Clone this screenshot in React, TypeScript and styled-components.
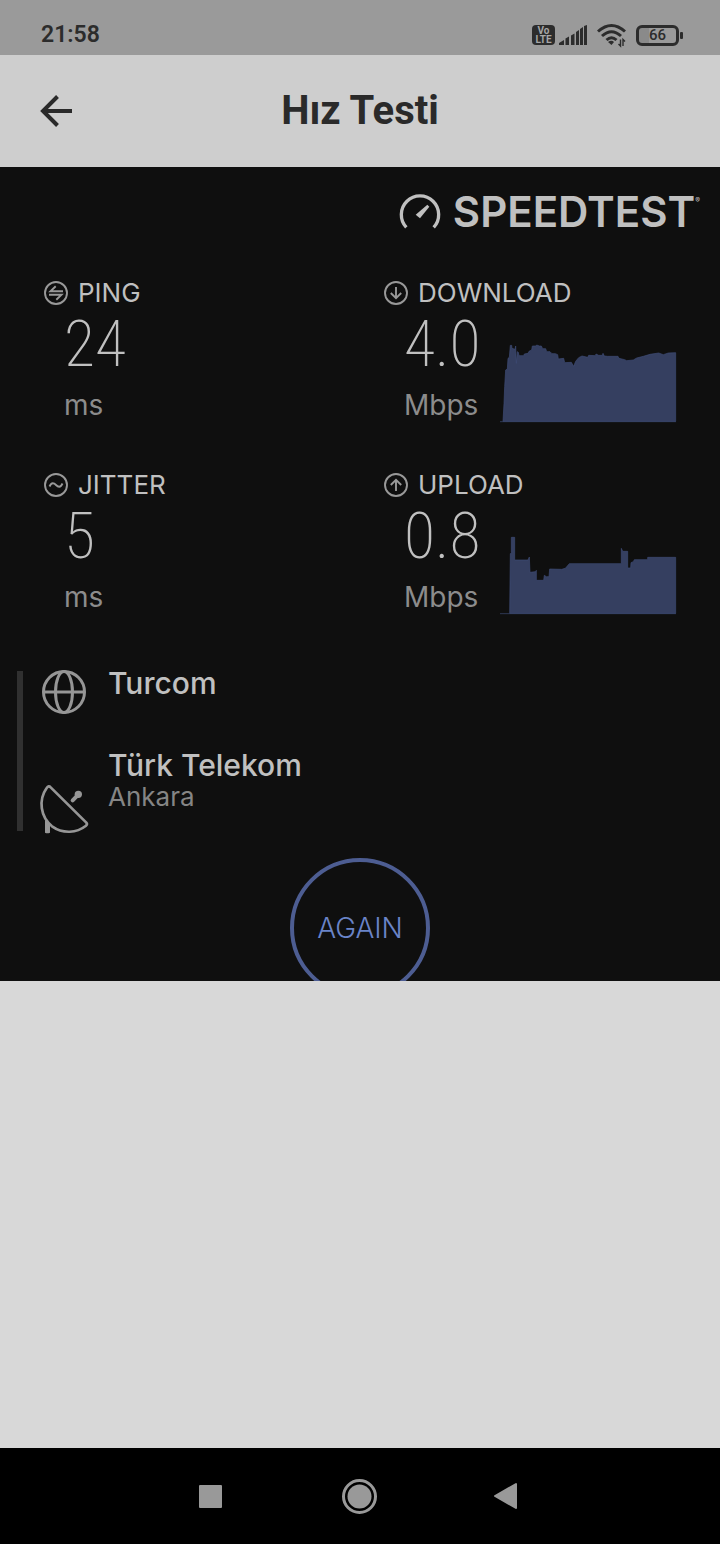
import React from "react";
import styled, { createGlobalStyle } from "styled-components";

const GlobalStyle = createGlobalStyle`
  *, *::before, *::after { box-sizing: border-box; }
  body { margin: 0; background: #d8d8d8; }
  button { padding: 0; border: 0; background: none; font: inherit; color: inherit; cursor: pointer; }
  svg { display: block; flex: none; overflow: visible; }
  h1, h2, p, dl, dt, dd { margin: 0; font-weight: inherit; font-size: inherit; }
`;

const Screen = styled.div`
  display: flex;
  flex-direction: column;
  min-height: 100vh;
  background: #d8d8d8;
  font-family: Inter, "Noto Sans", sans-serif;
`;

const StatusBar = styled.div`
  display: flex;
  align-items: flex-end;
  justify-content: space-between;
  height: 55px;
  padding: 0 41px 6px;
  background: #9a9a9a;
  color: #2c2c2c;
  font-family: Roboto, sans-serif;
`;

const Clock = styled.time`
  font-size: 23px;
  line-height: 28px;
  font-weight: 600;
`;

const StatusIcons = styled.div`
  display: flex;
  align-items: center;
  height: 28px;
`;

const VolteBadge = styled.div`
  display: flex;
  flex-direction: column;
  align-items: center;
  justify-content: center;
  width: 23px;
  height: 20px;
  margin-right: 4px;
  border-radius: 4px;
  background: #2c2c2c;
  color: #a6a6a6;
  font-size: 10px;
  line-height: 9px;
  font-weight: 700;
`;

const Battery = styled.div`
  position: relative;
  width: 43px;
  height: 21px;
  margin-left: 10px;
  border: 3px solid #2c2c2c;
  border-radius: 6px;
  background: linear-gradient(to right, #8a8a8a 10px, transparent 10px);
  font-size: 15px;
  line-height: 15px;
  font-weight: 500;
  text-align: center;

  &::after {
    content: "";
    position: absolute;
    right: -7px;
    top: 4px;
    width: 3px;
    height: 7px;
    border-radius: 1px;
    background: #2c2c2c;
  }
`;

const Header = styled.header`
  display: grid;
  grid-template-columns: 32px 1fr 32px;
  align-items: center;
  height: 112px;
  padding: 0 40px;
  background: #cecece;
  color: #2a2a2a;
`;

const Title = styled.h1`
  font-family: Roboto, sans-serif;
  font-size: 40px;
  line-height: 48px;
  font-weight: 700;
  text-align: center;
`;

const Panel = styled.main`
  padding: 0 20px;
  background: #0f0f0f;
  color: #c0c0c0;
`;

const Brand = styled.div`
  display: flex;
  justify-content: flex-end;
  align-items: center;
  height: 110px;
  padding-bottom: 20px;
`;

const Wordmark = styled.h2`
  margin-left: 12px;
  font-size: 42px;
  line-height: 48px;
  font-weight: 600;
`;

const Registered = styled.span`
  align-self: flex-start;
  margin-top: 30px;
  font-size: 7px;
  line-height: 8px;
`;

const Metrics = styled.dl`
  display: grid;
  grid-template-columns: 1fr 1fr;
  row-gap: 48px;
`;

const MetricCell = styled.div`
  padding: 0 24px;
`;

const MetricLabel = styled.dt`
  display: flex;
  align-items: center;
  gap: 10px;
  font-size: 26px;
  line-height: 32px;
`;

const MetricBody = styled.dd`
  display: flex;
  align-items: flex-end;
  justify-content: space-between;
  margin: 0;
  padding-left: 20px;
`;

const MetricValue = styled.p`
  font-family: "Roboto Condensed", Roboto, sans-serif;
  font-size: 64px;
  line-height: 72px;
  font-weight: 200;
`;

const MetricUnit = styled.p`
  margin-top: 8px;
  color: #8c8c8c;
  font-size: 28px;
  line-height: 32px;
`;

const Servers = styled.section`
  margin: 58px 0 0 -3px;
  padding-left: 17px;
  border-left: 6px solid #303030;
`;

const ServerRow = styled.div<{ $last?: boolean }>`
  display: flex;
  align-items: ${(p) => (p.$last ? "flex-end" : "flex-start")};
  gap: 20px;
  height: ${(p) => (p.$last ? 78 : 82)}px;
`;

const ServerText = styled.div`
  align-self: flex-start;
`;

const ServerName = styled.p`
  font-size: 30px;
  line-height: 24px;
  font-weight: 500;
`;

const ServerPlace = styled.p`
  margin-top: 4px;
  color: #858585;
  font-size: 26px;
  line-height: 32px;
`;

const AgainArea = styled.div`
  display: flex;
  justify-content: center;
  align-items: flex-start;
  height: 150px;
  padding-top: 27px;
  overflow: hidden;
`;

const AgainButton = styled.button`
  && {
    flex: none;
    width: 140px;
    height: 140px;
    border: 4px solid #4d5d92;
    border-radius: 50%;
    color: #6a84c8;
    font-size: 28px;
    font-weight: 300;
  }
`;

const NavBar = styled.nav`
  display: flex;
  align-items: center;
  justify-content: center;
  gap: 108px;
  height: 96px;
  margin-top: auto;
  padding-right: 2px;
  background: #000;
`;

const NavButton = styled.button`
  display: grid;
  place-items: center;
  width: 40px;
  height: 40px;
`;

const SignalIcon = () => (
  <svg width="28" height="20" viewBox="0 0 28 20" fill="#2c2c2c" aria-hidden="true">
    <path d="M0 20v-2l5-3v5zM6.500 13.500l3.500-2V20H6.500zM12 10.500l3.500-2V20H12zM17 7l3-2v15h-3zM21 4l3-2v18h-3zM25 1l3-1v20h-3z" />
  </svg>
);

const WifiIcon = () => (
  <svg width="29" height="22" viewBox="0 0 29 22" fill="none" stroke="#2c2c2c" strokeWidth="3" aria-hidden="true">
    <path d="M1 7.500Q14.500-4.500 28 7.500M5 12Q14.500 3.500 24 12M9.500 16Q14.500 11.500 19.500 16" />
    <path d="M14.500 21l-3.500-3q3.500-2.500 6 0z" fill="#2c2c2c" stroke="none" />
    <path d="M23.500 15.500v6.500l-2-2M26 22v-6.500l2 2" strokeWidth="1.400" />
  </svg>
);

const BackIcon = () => (
  <svg width="32" height="32" viewBox="0 0 32 32" fill="none" stroke="currentColor" strokeWidth="4" aria-hidden="true">
    <path d="M32 16H3M17.500 1.500L3 16l14.500 14.500" />
  </svg>
);

const GaugeIcon = () => (
  <svg width="42" height="36" viewBox="58 41 126 108" aria-hidden="true">
    <path d="M80 141A56 56 0 1 1 162 141" fill="none" stroke="#c0c0c0" strokeWidth="10" />
    <path d="M108 103L143 73L149 79L121 114Z" fill="#c0c0c0" />
  </svg>
);

const glyphs = {
  ping: "M19 10.300H6.500L11.700 5.300M5 13.700H17.500L12.300 18.700",
  jitter: "M5.500 13.500C7.500 9 10 10 12 12S16.500 15 18.500 10.500",
  download: "M12 6V17M6.800 12L12 17.200L17.200 12",
  upload: "M12 18V7M6.800 12L12 6.800L17.200 12",
};

type MetricKind = keyof typeof glyphs;

const MetricIcon = ({ kind }: { kind: MetricKind }) => (
  <svg width="24" height="24" viewBox="0 0 24 24" fill="none" stroke="#999" strokeWidth="1.900" aria-hidden="true">
    <circle cx="12" cy="12" r="11" />
    <path d={glyphs[kind]} />
  </svg>
);

const GlobeIcon = () => (
  <svg width="48" height="44" viewBox="0 0 48 44" fill="none" stroke="#969696" strokeWidth="3" aria-hidden="true">
    <circle cx="24" cy="21" r="20.500" />
    <ellipse cx="24" cy="21" rx="8.500" ry="20.500" />
    <path d="M3 21H45" />
  </svg>
);

const DishIcon = () => (
  <svg width="48" height="48" viewBox="120 398 144 144" aria-hidden="true">
    <path
      d="M152 411L259 517Q263 522 258 526C230 548 190 552 156 528C122 500 114 450 140 413Q146 404 152 411Z"
      fill="none"
      stroke="#969696"
      strokeWidth="8"
      strokeLinejoin="round"
    />
    <path d="M135 508L150 522V547Q142 551 135 547Z" fill="#969696" />
    <path d="M218 450L232 436" stroke="#969696" strokeWidth="12" strokeLinecap="round" />
    <circle cx="235" cy="432" r="11" fill="#969696" />
  </svg>
);

const charts = {
  download: {
    viewBox: "390 219 528 234",
    line: "M399 454L402 400L404 350L407 300L412 297L414 265L418 262L421 226L425 226L426 235L435 238L437 228L439 280L442 245L445 247L447 257H461L463 252L474 250L477 244L485 240L487 228H497L500 225L508 228H514L518 236H527L530 245H540L546 251H556L563 254L565 267L581 265L584 278L604 277L611 289L617 274L626 263L636 258L653 262L656 256L676 257L678 252L686 256H697L699 250L703 258L713 259H744L747 265L764 269L770 272L790 270L800 264L820 259L840 253L866 249L880 254L895 249L917 248V454",
    base: "M390 455H918",
  },
  upload: {
    viewBox: "390 224 528 234",
    line: "M419 459L421 280L424 277V231H434V299H474L478 290L480 336L496 334L499 330V360H521L523 345L529 349H537L539 326L575 327L586 324L598 310H754V264L758 273H773V323H782L783 307L790 304L793 298H833V291H917V459",
    base: "M390 460H918",
  },
};

const Chart = ({ kind }: { kind: keyof typeof charts }) => (
  <svg width="176" height="78" viewBox={charts[kind].viewBox} role="img" aria-label={kind + " speed over time"}>
    <path d={charts[kind].line + "Z"} fill="#353f60" stroke="#3e4b76" strokeWidth="2" />
    <path d={charts[kind].base} stroke="#3e4b76" strokeWidth="2" />
  </svg>
);

interface MetricProps {
  kind: MetricKind;
  label: string;
  value: string;
  unit: string;
}

const Metric = ({ kind, label, value, unit }: MetricProps) => (
  <MetricCell>
    <MetricLabel>
      <MetricIcon kind={kind} />
      {label}
    </MetricLabel>
    <MetricBody>
      <div>
        <MetricValue>{value}</MetricValue>
        <MetricUnit>{unit}</MetricUnit>
      </div>
      {(kind === "download" || kind === "upload") && <Chart kind={kind} />}
    </MetricBody>
  </MetricCell>
);

export default function App() {
  return (
    <Screen>
      <GlobalStyle />
      <StatusBar>
        <Clock>21:58</Clock>
        <StatusIcons>
          <VolteBadge>
            <span>Vo</span>
            <span>LTE</span>
          </VolteBadge>
          <SignalIcon />
          <svg width="10" height="1" aria-hidden="true" />
          <WifiIcon />
          <Battery>66</Battery>
        </StatusIcons>
      </StatusBar>
      <Header>
        <button type="button" aria-label="Geri">
          <BackIcon />
        </button>
        <Title>Hız Testi</Title>
      </Header>
      <Panel>
        <Brand>
          <GaugeIcon />
          <Wordmark>SPEEDTEST</Wordmark>
          <Registered>®</Registered>
        </Brand>
        <Metrics>
          <Metric kind="ping" label="PING" value="24" unit="ms" />
          <Metric kind="download" label="DOWNLOAD" value="4.0" unit="Mbps" />
          <Metric kind="jitter" label="JITTER" value="5" unit="ms" />
          <Metric kind="upload" label="UPLOAD" value="0.8" unit="Mbps" />
        </Metrics>
        <Servers>
          <ServerRow>
            <GlobeIcon />
            <ServerText>
              <ServerName>Turcom</ServerName>
            </ServerText>
          </ServerRow>
          <ServerRow $last>
            <DishIcon />
            <ServerText>
              <ServerName>Türk Telekom</ServerName>
              <ServerPlace>Ankara</ServerPlace>
            </ServerText>
          </ServerRow>
        </Servers>
        <AgainArea>
          <AgainButton type="button">AGAIN</AgainButton>
        </AgainArea>
      </Panel>
      <NavBar>
        <NavButton type="button" aria-label="Recent apps">
          <svg width="24" height="24" viewBox="0 0 24 24" aria-hidden="true">
            <rect x="0" y="1" width="23" height="23" rx="1" fill="#999" />
          </svg>
        </NavButton>
        <NavButton type="button" aria-label="Home">
          <svg width="36" height="36" viewBox="0 0 36 36" aria-hidden="true">
            <circle cx="18.500" cy="18.500" r="16" fill="none" stroke="#999" strokeWidth="3" />
            <circle cx="18.500" cy="18.500" r="12" fill="#999" />
          </svg>
        </NavButton>
        <NavButton type="button" aria-label="Back">
          <svg width="24" height="26" viewBox="0 0 24 26" aria-hidden="true">
            <path d="M21 1V25L0 13Z" fill="#999" stroke="#999" strokeWidth="2" strokeLinejoin="round" />
          </svg>
        </NavButton>
      </NavBar>
    </Screen>
  );
}
